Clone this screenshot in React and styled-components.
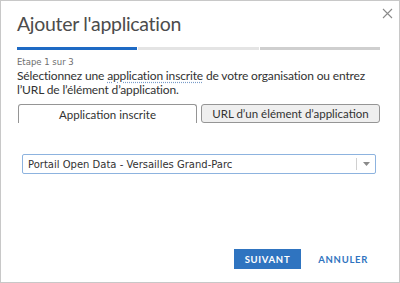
import React from 'react';
import styled, { createGlobalStyle } from 'styled-components';

const GlobalStyle = createGlobalStyle`
  html, body {
    margin: 0;
    padding: 0;
    background: #fff;
  }
  * {
    box-sizing: border-box;
  }
`;

const Dialog = styled.div`
  position: relative;
  width: 400px;
  height: 283px;
  border: 1px solid #c8c8c8;
  background: #fff;
  display: flex;
  flex-direction: column;
  padding: 10px 19px 13px 16px;
  font-family: Lato, 'Open Sans', sans-serif;
  color: #323232;
`;

const Title = styled.h2`
  margin: 0;
  font-size: 19.5px;
  font-weight: 400;
  line-height: 26px;
  color: #4c4c4c;
  letter-spacing: -0.3px;
`;

const Close = styled.button`
  position: absolute;
  top: 5px;
  right: 5px;
  width: 14px;
  height: 14px;
  padding: 0;
  border: none;
  background: none;
  cursor: pointer;
  display: flex;
  align-items: center;
  justify-content: center;
`;

const Steps = styled.div`
  display: flex;
  margin-top: 10px;
  gap: 1px;
`;

const Step = styled.div`
  flex: 1;
  height: 3px;
  background: ${(p) => p.color};
`;

const StepLabel = styled.div`
  margin-top: 6px;
  font-family: 'DejaVu Sans', Verdana, sans-serif;
  font-size: 8.5px;
  color: #6e6e6e;
  line-height: 12px;
`;

const Intro = styled.p`
  margin: 1px 0 0;
  font-size: 12px;
  line-height: 14px;
  letter-spacing: -0.15px;
  color: #323232;
`;

const Hint = styled.span`
  text-decoration: underline dotted #7a9cc8;
  text-underline-offset: 2px;
`;

const Tabs = styled.div`
  display: flex;
  gap: 4px;
  margin-top: 7px;
  padding-left: 1px;
`;

const Tab = styled.button`
  flex: 1;
  height: 19px;
  font-family: Lato, 'Open Sans', sans-serif;
  font-size: 11.5px;
  color: #323232;
  background: ${(p) => (p.active ? '#fff' : '#efefef')};
  border: 1px solid #959595;
  border-bottom: ${(p) => (p.active ? 'none' : '1px solid #959595')};
  border-radius: 3px 3px ${(p) => (p.active ? '0 0' : '3px 3px')};
  padding: 0;
  cursor: pointer;
`;

const SelectBox = styled.div`
  margin: 31px 4px 0 5px;
  height: 20px;
  border: 1px solid #8db3df;
  border-radius: 2px;
  display: flex;
  align-items: center;
  padding-left: 5px;
  font-family: 'DejaVu Sans', Verdana, sans-serif;
  font-size: 10px;
  color: #323232;
`;

const SelectText = styled.span`
  flex: 1;
`;

const Divider = styled.span`
  width: 1px;
  height: 12px;
  background: #d0d0d0;
`;

const Caret = styled.span`
  width: 18px;
  display: flex;
  justify-content: center;
`;

const Footer = styled.div`
  margin-top: auto;
  display: flex;
  justify-content: flex-end;
  align-items: center;
  gap: 17px;
  padding-right: 12px;
`;

const Button = styled.button`
  height: 20px;
  padding: 0 ${(p) => (p.primary ? '11px' : '0')};
  border: none;
  border-radius: 0;
  background: ${(p) => (p.primary ? '#2f74c0' : 'transparent')};
  color: ${(p) => (p.primary ? '#fff' : '#2f74c0')};
  font-family: Lato, sans-serif;
  font-weight: 700;
  font-size: 9.5px;
  letter-spacing: 0.7px;
  cursor: pointer;
`;

export default function App() {
  return (
    <>
      <GlobalStyle />
      <Dialog>
        <Close aria-label='Fermer'>
          <svg width='11' height='11' viewBox='0 0 11 11'>
            <path d='M1 1 L10 10 M10 1 L1 10' stroke='#8a8a8a' strokeWidth='1.1' />
          </svg>
        </Close>
        <Title>Ajouter l'application</Title>
        <Steps>
          <Step color='#1e6ac4' />
          <Step color='#e4e4e4' />
          <Step color='#cfcfcf' />
        </Steps>
        <StepLabel>Etape 1 sur 3</StepLabel>
        <Intro>
          Sélectionnez une <Hint>application inscrite</Hint> de votre organisation ou entrez
          l’URL de l’élément d’application.
        </Intro>
        <Tabs>
          <Tab active>Application inscrite</Tab>
          <Tab>URL d’un élément d’application</Tab>
        </Tabs>
        <SelectBox>
          <SelectText>Portail Open Data - Versailles Grand-Parc</SelectText>
          <Divider />
          <Caret>
            <svg width='7' height='4' viewBox='0 0 7 4'>
              <path d='M0 0 L7 0 L3.5 4 Z' fill='#8a8a8a' />
            </svg>
          </Caret>
        </SelectBox>
        <Footer>
          <Button primary>SUIVANT</Button>
          <Button>ANNULER</Button>
        </Footer>
      </Dialog>
    </>
  );
}
